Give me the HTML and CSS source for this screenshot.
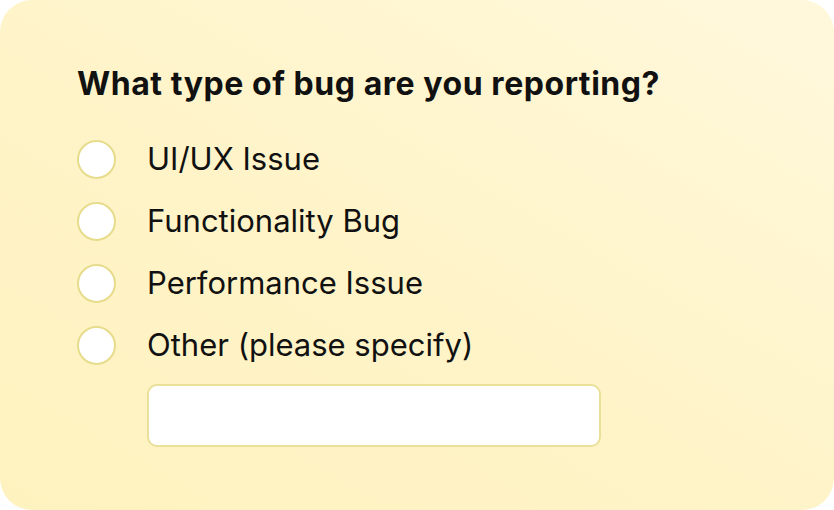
FILE: index.html
```html
<!DOCTYPE html>
<html lang="en">
<head>
<meta charset="utf-8">
<title>Bug report</title>
<link rel="stylesheet" href="styles.css">
</head>
<body>
<form class="card">
  <h1 class="question">What type of bug are you reporting?</h1>
  <div class="options">
    <label class="option"><span class="radio"></span><span class="label">UI/UX Issue</span></label>
    <label class="option"><span class="radio"></span><span class="label">Functionality Bug</span></label>
    <label class="option"><span class="radio"></span><span class="label">Performance Issue</span></label>
    <label class="option"><span class="radio"></span><span class="label">Other (please specify)</span></label>
  </div>
  <div class="other-field"><span class="text-input"></span></div>
</form>
</body>
</html>
```

FILE: styles.css
```css
* { box-sizing: border-box; }
html, body { margin: 0; padding: 0; background: #ffffff; }
body { width: 834px; height: 510px; overflow: hidden; }
.card {
  width: 834px;
  height: 510px;
  margin: 0;
  border-radius: 32px;
  background: linear-gradient(30deg, #fef2bf 0%, #fff4c9 50%, #fff8dc 100%);
  padding: 60px 0 0 77px;
  font-family: "Inter", "Liberation Sans", sans-serif;
  color: #111111;
}
.question {
  margin: 0;
  font-size: 32px;
  font-weight: 700;
  line-height: 48px;
  letter-spacing: 0.55px;
}
.options {
  margin-top: 32px;
  display: flex;
  flex-direction: column;
  gap: 24px;
}
.option {
  display: flex;
  align-items: center;
  height: 38px;
}
.radio {
  width: 39px;
  height: 39px;
  border-radius: 50%;
  background: #ffffff;
  border: 2px solid #e6dc8c;
  flex: none;
}
.label {
  margin-left: 31px;
  font-size: 31px;
  line-height: 38px;
  font-weight: 400;
}
.other-field {
  margin-top: 20px;
  padding-left: 70px;
}
.text-input {
  display: block;
  width: 454px;
  height: 63px;
  background: #ffffff;
  border: 2px solid #e9e099;
  border-radius: 10px;
}
```
